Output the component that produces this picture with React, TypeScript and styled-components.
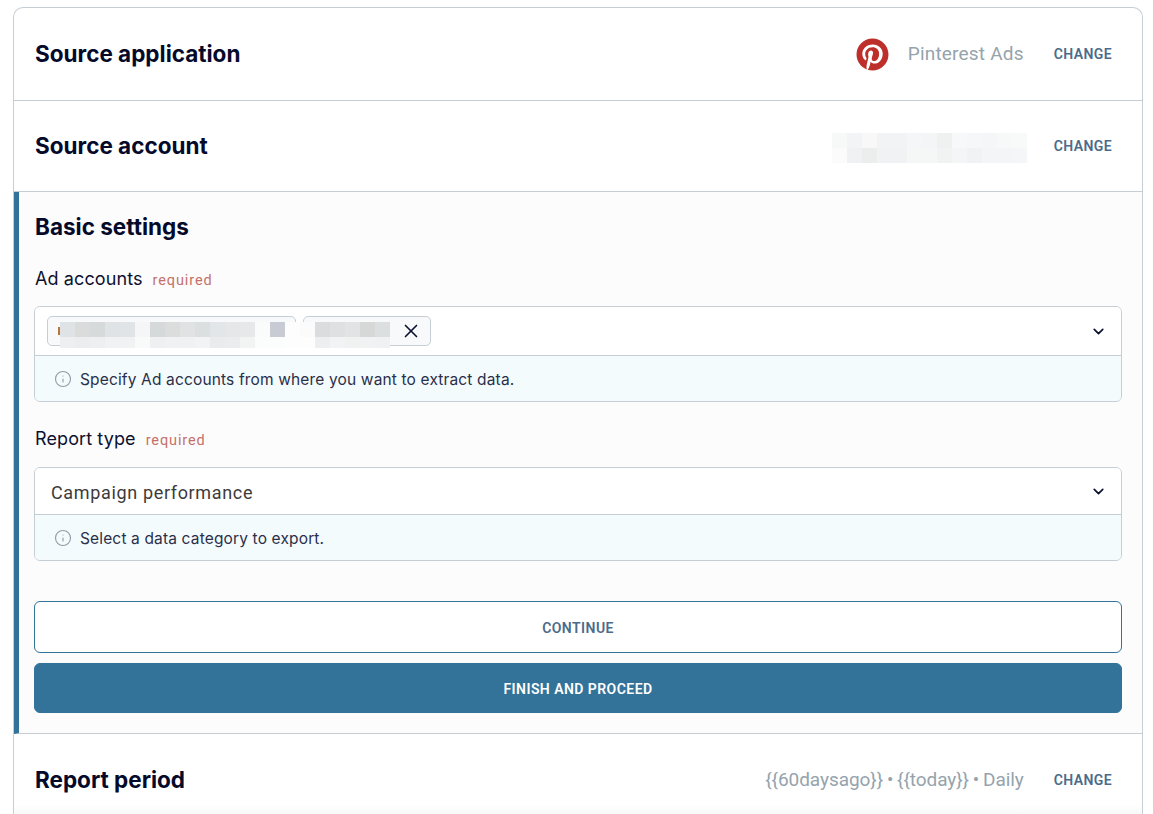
import React from 'react';
import styled, { createGlobalStyle } from 'styled-components';
import { FaPinterest } from 'react-icons/fa';
import { ChevronDown, Info, X } from 'lucide-react';

const GlobalStyle = createGlobalStyle`
  html, body {
    margin: 0;
    padding: 0;
    height: 814px;
    overflow: hidden;
    background: #fff;
  }
  * { box-sizing: border-box; }
`;

const BODY_FONT = `Inter, "Liberation Sans", sans-serif`;
const VALUE_FONT = `Roboto, "Liberation Sans", sans-serif`;

// colours read off the pixelated patches in the reference
const ACCOUNT_CELLS = [
  ['#f7f8f8', '#f3f4f5', '#f8f8f8', '#f1f3f4', '#f1f3f4', '#f5f6f7', '#f4f5f6', '#eff0f0', '#f7f8f9', '#f6f7f8', '#f4f6f7', '#f7f8f8', '#f8f9f9'],
  ['#fbfbfb', '#f0f1f2', '#eceeee', '#f0f2f3', '#f0f2f3', '#f5f6f6', '#f5f6f6', '#f1f2f2', '#f4f5f6', '#f1f2f3', '#f4f5f6', '#f4f5f6', '#f5f6f7'],
];

const CHIP_CELLS = [
  ['#dfe3e5', '#dadcdc', '#d7dadb', '#dfe3e5', '#e0e4e6', '#f4f6f7', '#d6d9da', '#dbdddd', '#e0e2e3', '#dcdfe0', '#e3e6e8', '#e6e7e9', '#e6e8e9', '#fafbfb', '#c8cbd4', '#fdfdfd', '#fbfbfc', '#dadcdd', '#dee0e1', '#e1e3e4', '#d6d8d8', '#dcdfe0'],
  ['#edeff0', '#ebedee', '#edeff0', '#f0f2f3', '#f0f2f3', '#f9fafa', '#eff0f1', '#eff1f2', '#f0f1f2', '#f1f3f4', '#e9ebec', '#eaeced', '#f2f4f4', '#fbfcfc', '#fbfcfc', '#fdfdfd', '#fdfdfd', '#eceeef', '#f2f3f4', '#f0f2f2', '#f1f2f3', '#eff1f2'],
];

const Card = styled.main`
  margin: 7px 10px 0 13px;
  border: 1px solid #c6ced5;
  border-bottom: none;
  border-radius: 10px 10px 0 0;
  overflow: hidden;
  background: #fff;
`;

const SummaryRow = styled.section<{ $height: number }>`
  height: ${p => p.$height}px;
  padding: 0 30px 0 20px;
  display: flex;
  align-items: center;
  justify-content: space-between;
  border-bottom: 1px solid #c6ced5;
  &:last-child {
    border-bottom: none;
    background: linear-gradient(#fff 0, #fff 70px, #f7f9fa 80px);
    padding-top: 1px;
  }
`;

const Title = styled.h2`
  margin: 0 0 0 1px;
  font: 700 22.5px/28px ${BODY_FONT};
  letter-spacing: 0;
  color: #050a2a;
`;

const RowValue = styled.div`
  display: flex;
  align-items: center;
`;

const AppLogo = styled(FaPinterest)`
  width: 33px;
  height: 33px;
  color: #bd2f2a;
  margin-right: 19px;
`;

const ValueText = styled.span<{ $tight?: boolean }>`
  font: 400 19px/24px ${VALUE_FONT};
  color: #95a3ac;
  letter-spacing: ${p => (p.$tight ? '-0.06px' : '0.2px')};
`;

const ChangeButton = styled.button`
  margin-left: 30px;
  padding: 0;
  border: none;
  background: none;
  font: 600 14px/18px ${VALUE_FONT};
  letter-spacing: 0.4px;
  color: #4b6b8a;
  text-transform: uppercase;
`;

const PixelPatch = styled.div<{ $cols: number; $cell: number }>`
  display: grid;
  grid-template-columns: repeat(${p => p.$cols}, ${p => p.$cell}px);
  grid-auto-rows: 15px;
`;

const Cell = styled.span<{ $color: string }>`
  background: ${p => p.$color};
`;

const AccountPatch = styled(PixelPatch)`
  margin: 4px -3px 0 0;
`;

const ActiveStep = styled.section`
  height: 542px;
  padding: 21px 20px 0 15px;
  background: #fcfcfc;
  border-left: 5px solid #337399;
  border-bottom: 1px solid #c6ced5;
  display: flex;
  flex-direction: column;
`;

const FieldLabel = styled.div<{ $top: number }>`
  margin: ${p => p.$top}px 0 0 1px;
  display: flex;
  align-items: baseline;
  gap: 10px;
  font: 400 18px/24px ${BODY_FONT};
  letter-spacing: 0.1px;
  color: #0c1130;
`;

const Required = styled.span`
  font: 400 14.5px/20px ${VALUE_FONT};
  letter-spacing: 0.9px;
  color: #c4706a;
`;

const FieldBox = styled.div<{ $top: number }>`
  margin-top: ${p => p.$top}px;
  border: 1px solid #c6ced5;
  border-radius: 6px;
  overflow: hidden;
`;

const SelectRow = styled.div<{ $height: number; $padLeft: number }>`
  position: relative;
  height: ${p => p.$height}px;
  padding: 0 14px 0 ${p => p.$padLeft}px;
  display: flex;
  align-items: center;
  gap: 7px;
  background: #fff;
  border-bottom: 1px solid #c6ced5;
  font: 400 18px/24px ${VALUE_FONT};
  letter-spacing: 0.65px;
  color: #3d3a3a;
`;

const SelectValue = styled.span`
  padding-top: 3px;
`;

const Chip = styled.div<{ $width: number }>`
  width: ${p => p.$width}px;
  height: 30px;
  padding-right: 8px;
  display: flex;
  align-items: center;
  justify-content: flex-end;
  background: #f7f9fa;
  border: 1px solid #c6ced5;
  border-radius: 5px;
  color: #0c1130;
`;

// the blurred-out account names lie over the two chips and spill past them
const ChipPatch = styled(PixelPatch)`
  position: absolute;
  top: 15px;
  left: 25px;
  grid-auto-rows: 15px 11px;
  &::before {
    content: '';
    position: absolute;
    top: 5px;
    left: -2px;
    width: 2px;
    height: 8px;
    background: #b9763c;
  }
`;

const Chevron = styled(ChevronDown)`
  width: 17px;
  height: 17px;
  margin-left: auto;
  color: #0c1130;
  stroke-width: 2.4;
`;

const HintRow = styled.div`
  height: 45px;
  padding: 2px 19px 0;
  display: flex;
  align-items: center;
  gap: 8px;
  background: #f4fbfd;
  font: 400 15.5px/20px ${BODY_FONT};
  letter-spacing: 0.15px;
  color: #2a2f4a;
`;

const HintIcon = styled(Info)`
  width: 18px;
  height: 18px;
  margin-top: -2px;
  color: #8f9da6;
  stroke-width: 1.5;
`;

const ActionButton = styled.button<{ $primary?: boolean; $top: number }>`
  margin-top: ${p => p.$top}px;
  height: ${p => (p.$primary ? 50 : 52)}px;
  padding: 2px 0 0;
  border: 1px solid #337399;
  border-radius: 6px;
  background: ${p => (p.$primary ? '#337399' : '#fff')};
  color: ${p => (p.$primary ? '#fff' : '#4b6b8a')};
  font: 600 14px/18px ${VALUE_FONT};
  letter-spacing: 0.45px;
  text-transform: uppercase;
`;

const Patch: React.FC<{ rows: string[][]; cell: number; as?: typeof PixelPatch }> = ({
  rows,
  cell,
  as: Wrapper = PixelPatch,
}) => (
  <Wrapper $cols={rows[0].length} $cell={cell}>
    {rows.flat().map((color, i) => (
      <Cell key={i} $color={color} />
    ))}
  </Wrapper>
);

export default function App() {
  return (
    <>
      <GlobalStyle />
      <Card>
        <SummaryRow $height={93}>
          <Title>Source application</Title>
          <RowValue>
            <AppLogo />
            <ValueText>Pinterest Ads</ValueText>
            <ChangeButton>Change</ChangeButton>
          </RowValue>
        </SummaryRow>
        <SummaryRow $height={91}>
          <Title>Source account</Title>
          <RowValue>
            <Patch rows={ACCOUNT_CELLS} cell={15} as={AccountPatch} />
            <ChangeButton>Change</ChangeButton>
          </RowValue>
        </SummaryRow>
        <ActiveStep>
          <Title>Basic settings</Title>
          <FieldLabel $top={26}>
            Ad accounts <Required>required</Required>
          </FieldLabel>
          <FieldBox $top={15}>
            <SelectRow $height={49} $padLeft={12}>
              <Chip $width={249} />
              <Chip $width={128}>
                <X size={22} strokeWidth={1.8} />
              </Chip>
              <Patch rows={CHIP_CELLS} cell={15} as={ChipPatch} />
              <Chevron />
            </SelectRow>
            <HintRow>
              <HintIcon />
              Specify Ad accounts from where you want to extract data.
            </HintRow>
          </FieldBox>
          <FieldLabel $top={25}>
            Report type <Required>required</Required>
          </FieldLabel>
          <FieldBox $top={16}>
            <SelectRow $height={47} $padLeft={16}>
              <SelectValue>Campaign performance</SelectValue>
              <Chevron />
            </SelectRow>
            <HintRow>
              <HintIcon />
              Select a data category to export.
            </HintRow>
          </FieldBox>
          <ActionButton $top={40}>Continue</ActionButton>
          <ActionButton $top={10} $primary>
            Finish and proceed
          </ActionButton>
        </ActiveStep>
        <SummaryRow $height={90}>
          <Title>Report period</Title>
          <RowValue>
            <ValueText $tight>{'{{60daysago}}\u2009•\u2009{{today}}\u2009•\u2009Daily'}</ValueText>
            <ChangeButton>Change</ChangeButton>
          </RowValue>
        </SummaryRow>
      </Card>
    </>
  );
}
